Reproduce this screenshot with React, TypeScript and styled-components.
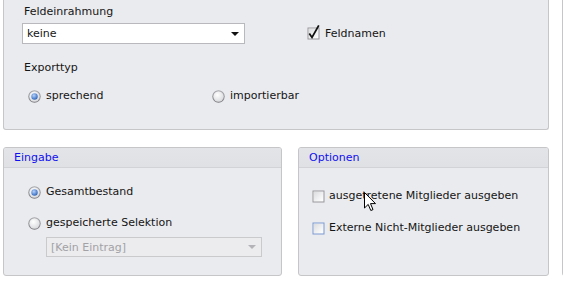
import React from "react";
import styled, { createGlobalStyle } from "styled-components";

const Global = createGlobalStyle`
  html, body { margin: 0; padding: 0; background: #ffffff; }
  body {
    font-family: "DejaVu Sans", "Liberation Sans", sans-serif;
    font-size: 11px;
    color: #151515;
    overflow: hidden;
  }
`;

const Page = styled.div`
  display: flex;
  gap: 13px;
  padding-left: 3px;
  width: 563px;
  height: 291px;
  box-sizing: border-box;
  overflow: hidden;
`;

const MainColumn = styled.div`
  display: flex;
  flex-direction: column;
  gap: 17px;
  width: 546px;
  flex: none;
`;

const SidePanel = styled.div`
  flex: none;
  width: 120px;
  height: 276px;
  box-sizing: border-box;
  background: #eaebee;
  border: 1px solid #c6c6c9;
  border-top: none;
  border-radius: 0 0 3px 3px;
`;

const TopPanel = styled.div`
  height: 130px;
  box-sizing: border-box;
  background: #eaebee;
  border: 1px solid #c6c6c9;
  border-top: none;
  border-radius: 0 0 3px 3px;
  padding: 5px 0 0 18px;
  display: flex;
  flex-direction: column;
`;

const Label = styled.div<{ $mt?: number }>`
  line-height: 13px;
  padding-left: 2px;
  margin-top: ${(p) => p.$mt ?? 0}px;
`;

const Row = styled.div<{ $mt?: number; $pl?: number }>`
  display: flex;
  align-items: center;
  margin-top: ${(p) => p.$mt ?? 0}px;
  padding-left: ${(p) => p.$pl ?? 0}px;
`;

const Combo = styled.div<{ $w: number; $h: number; $disabled?: boolean }>`
  width: ${(p) => p.$w}px;
  height: ${(p) => p.$h}px;
  box-sizing: border-box;
  display: flex;
  align-items: center;
  justify-content: space-between;
  padding: 0 4px 0 4px;
  background: ${(p) => (p.$disabled ? "#ececee" : "#ffffff")};
  border: 1px solid ${(p) => (p.$disabled ? "#cacacd" : "#b9b9bd")};
  color: ${(p) => (p.$disabled ? "#a2a2a6" : "#151515")};
  flex: none;
`;

const ComboArrow = styled.span<{ $disabled?: boolean }>`
  width: 0;
  height: 0;
  border-left: 4px solid transparent;
  border-right: 4px solid transparent;
  border-top: 4px solid ${(p) => (p.$disabled ? "#b4b4b8" : "#111111")};
  margin-right: 1px;
`;

const Choice = styled.label<{ $w?: number; $gap?: number }>`
  display: flex;
  align-items: center;
  gap: ${(p) => p.$gap ?? 5}px;
  height: 14px;
  line-height: 14px;
  width: ${(p) => (p.$w ? `${p.$w}px` : "auto")};
  flex: none;
  white-space: nowrap;
`;

const BottomRow = styled.div`
  display: flex;
  gap: 16px;
`;

const GroupPanel = styled.div<{ $w: number }>`
  position: relative;
  width: ${(p) => p.$w}px;
  height: 129px;
  box-sizing: border-box;
  background: #eaebee;
  border: 1px solid #c6c6c9;
  border-radius: 3px;
  display: flex;
  flex-direction: column;
  overflow: hidden;
`;

const GroupHeader = styled.div`
  height: 20px;
  box-sizing: border-box;
  line-height: 19px;
  padding-left: 10px;
  color: #1010f0;
  background: linear-gradient(#e3e4e7, #e0e1e4);
  border-bottom: 1px solid #d2d3d6;
  flex: none;
`;

const GroupBody = styled.div<{ $pt: number; $pl: number }>`
  display: flex;
  flex-direction: column;
  padding: ${(p) => p.$pt}px 0 0 ${(p) => p.$pl}px;
`;

const Cursor = styled.svg`
  position: absolute;
  left: 65px;
  top: 44px;
`;

function Radio({ checked }: { checked?: boolean }) {
  const id = checked ? "rc" : "ru";
  return (
    <svg width="13" height="13" viewBox="0 0 13 13">
      <defs>
        <linearGradient id={id + "o"} x1="0" y1="0" x2="0" y2="1">
          <stop offset="0" stopColor="#a9a9ad" />
          <stop offset="1" stopColor="#7c7c80" />
        </linearGradient>
        <radialGradient id={id + "i"} cx="0.4" cy="0.35" r="0.7">
          <stop offset="0" stopColor="#ffffff" />
          <stop offset="1" stopColor="#d8d9dc" />
        </radialGradient>
        <radialGradient id={id + "d"} cx="0.4" cy="0.35" r="0.7">
          <stop offset="0" stopColor="#b9d2f5" />
          <stop offset="0.6" stopColor="#5f8fd8" />
          <stop offset="1" stopColor="#2f5fb0" />
        </radialGradient>
      </defs>
      <circle cx="6.5" cy="6.5" r="6.2" fill={`url(#${id}o)`} />
      <circle cx="6.5" cy="6.5" r="5.2" fill={`url(#${id}i)`} />
      {checked && <circle cx="6.5" cy="6.5" r="3.2" fill={`url(#${id}d)`} />}
    </svg>
  );
}

function Check({ checked, hover }: { checked?: boolean; hover?: boolean }) {
  return (
    <svg width="13" height="13" viewBox="0 0 13 13" style={{ overflow: "visible" }}>
      <defs>
        <linearGradient id="cbf" x1="0" y1="0" x2="1" y2="1">
          <stop offset="0" stopColor="#dcdde0" />
          <stop offset="1" stopColor="#ffffff" />
        </linearGradient>
      </defs>
      <rect x="0.5" y="0.5" width="12" height="12" fill={hover ? "#7d9ad2" : "#9a9a9e"} />
      <rect x="1.5" y="1.5" width="10" height="10" fill="#f4f4f6" />
      <rect x="2" y="2" width="9" height="9" fill="url(#cbf)" />
      {checked && (
        <path
          d="M2.3 6.6 L5 10.4 L11.8 -1.6"
          fill="none"
          stroke="#111111"
          strokeWidth="1.8"
          strokeLinejoin="miter"
        />
      )}
    </svg>
  );
}

export default function App() {
  return (
    <>
      <Global />
      <Page>
        <MainColumn>
          <TopPanel>
            <Label>Feldeinrahmung</Label>
            <Row $mt={5}>
              <Combo $w={223} $h={21}>
                <span>keine</span>
                <ComboArrow />
              </Combo>
              <Choice $gap={5} style={{ marginLeft: 62 }}>
                <Check checked />
                <span>Feldnamen</span>
              </Choice>
            </Row>
            <Label $mt={17}>Exporttyp</Label>
            <Row $mt={15} $pl={6}>
              <Choice $w={184}>
                <Radio checked />
                <span>sprechend</span>
              </Choice>
              <Choice>
                <Radio />
                <span>importierbar</span>
              </Choice>
            </Row>
          </TopPanel>
          <BottomRow>
            <GroupPanel $w={279}>
              <GroupHeader>Eingabe</GroupHeader>
              <GroupBody $pt={17} $pl={24}>
                <Choice>
                  <Radio checked />
                  <span>Gesamtbestand</span>
                </Choice>
                <Choice style={{ marginTop: 17 }}>
                  <Radio />
                  <span>gespeicherte Selektion</span>
                </Choice>
                <Row $mt={7} $pl={18}>
                  <Combo $w={216} $h={20} $disabled>
                    <span>[Kein Eintrag]</span>
                    <ComboArrow $disabled />
                  </Combo>
                </Row>
              </GroupBody>
            </GroupPanel>
            <GroupPanel $w={251}>
              <GroupHeader>Optionen</GroupHeader>
              <GroupBody $pt={21} $pl={13}>
                <Choice $gap={4}>
                  <Check />
                  <span>ausgetretene Mitglieder ausgeben</span>
                </Choice>
                <Choice $gap={4} style={{ marginTop: 18 }}>
                  <Check hover />
                  <span>Externe Nicht-Mitglieder ausgeben</span>
                </Choice>
              </GroupBody>
              <Cursor width="13" height="20" viewBox="0 0 13 20">
                <path
                  d="M0.5 0.5 L0.5 16 L4.2 12.4 L6.8 18.5 L9 17.6 L6.5 11.6 L11.5 11.6 Z"
                  fill="#ffffff"
                  stroke="#000000"
                  strokeWidth="1"
                  strokeLinejoin="miter"
                />
              </Cursor>
            </GroupPanel>
          </BottomRow>
        </MainColumn>
        <SidePanel />
      </Page>
    </>
  );
}
